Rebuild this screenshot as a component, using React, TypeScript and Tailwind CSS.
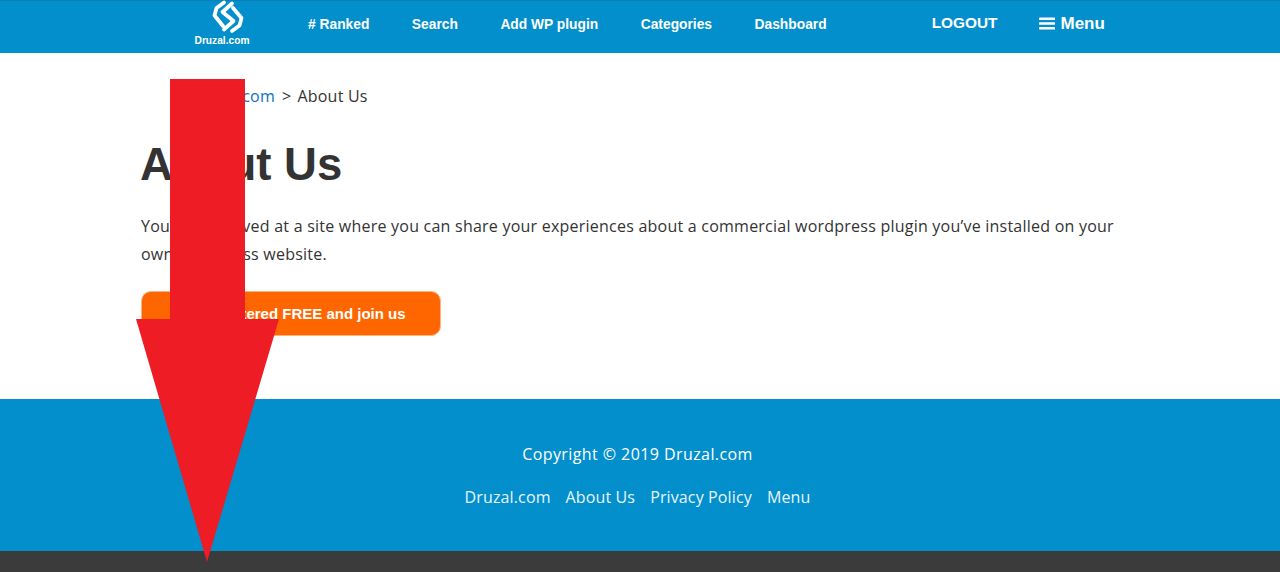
import React from "react";

const sans = "font-['Liberation_Sans',Arial,sans-serif]";
const body = "font-['Open_Sans','Noto_Sans',sans-serif] tracking-[0.23px]";

function Logo() {
  return (
    <svg viewBox="0 0 34 34" className="-mt-[1px] ml-[12px] h-[34px] w-[34px]" fill="none" stroke="#fff" strokeWidth="3.8" strokeLinejoin="round" strokeLinecap="round">
      <path d="M13 2.5 L5.5 8 L3.5 15.5 L12 26" />
      <path d="M21 31 L28.5 25.5 L30.5 18 L22 8" />
      <path d="M21 3.5 L11.5 12 L22.5 21 L13 29.5" />
    </svg>
  );
}

function NavLink({ children, className }: { children: React.ReactNode; className?: string }) {
  return <a className={`font-bold text-white whitespace-nowrap ${className ?? ""}`}>{children}</a>;
}

export default function App() {
  return (
    <div className={`relative h-[572px] w-[1280px] overflow-hidden bg-white ${sans}`}>
      <header className="flex h-[53px] items-start bg-[#038fcc] pl-[194px] border-t border-t-[#0a80b8]">
        <div className="flex w-[56px] flex-col items-center">
          <Logo />
          <span className="mt-[1px] text-[10.2px] leading-[12px] font-bold text-white">Druzal.com</span>
        </div>
        <nav className="ml-[58px] flex h-[48px] items-center gap-[42.5px] text-[13.8px]">
          <NavLink>#&nbsp;Ranked</NavLink>
          <NavLink>Search</NavLink>
          <NavLink>Add WP plugin</NavLink>
          <NavLink>Categories</NavLink>
          <NavLink>Dashboard</NavLink>
        </nav>
        <div className="ml-[105px] flex h-[45px] items-center">
          <NavLink className="pb-[2px] text-[15.4px]">LOGOUT</NavLink>
          <span className="ml-[42px] flex items-center gap-[5px]">
            <svg viewBox="0 0 16 13" className="h-[13px] w-[16px]" fill="#fff">
              <rect x="0" y="0.5" width="16" height="2.6" rx="0.6" />
              <rect x="0" y="5.2" width="16" height="2.6" rx="0.6" />
              <rect x="0" y="9.9" width="16" height="2.6" rx="0.6" />
            </svg>
            <NavLink className="text-[17px]">Menu</NavLink>
          </span>
        </div>
      </header>

      <main className="h-[346px] pl-[141px] text-[#333]">
        <div className={`pl-[47px] pt-[32px] text-[16px] leading-[22px] ${body}`}>
          <a className="text-[#0b72c4]">Druzal.com</a>
          <span className="ml-[7px]">&gt;</span>
          <span className="ml-[6px]">About Us</span>
        </div>
        <h1 className="mt-[30px] -ml-[1px] text-[45.5px] leading-[56px] font-bold text-[#333]">About Us</h1>
        <p className={`mt-[19px] w-[985px] text-[16px] leading-[28px] ${body}`}>
          You have arrived at a site where you can share your experiences about a commercial wordpress plugin you’ve installed on your own wordpress website.
        </p>
        <a className="mt-[23px] flex h-[45px] w-[300px] items-center justify-center rounded-[10px] border border-[#ffb27f] bg-[#ff6600] pt-[1px] text-[15px] font-bold text-white">
          Get registered FREE and join us
        </a>
      </main>

      <footer className={`flex h-[152px] flex-col items-center bg-[#038fcc] pr-[5px] text-white ${body}`}>
        <div className="pt-[43px] text-[16px] leading-[24px] tracking-[0.42px]">Copyright © 2019 Druzal.com</div>
        <div className="mt-[19px] flex gap-[15px] text-[16px] leading-[24px] tracking-[0.13px] text-[#e8f5fb]">
          <a>Druzal.com</a>
          <a>About Us</a>
          <a>Privacy Policy</a>
          <a>Menu</a>
        </div>
      </footer>
      <div className="h-[21px] bg-[#3b3b3b]" />

      <svg className="absolute left-[136px] top-[79px] h-[483px] w-[143px]" viewBox="0 0 143 483" fill="#ee1c25">
        <polygon points="34,0 109,0 109,240 143,240 71,483 0,240 34,240" />
      </svg>
    </div>
  );
}
